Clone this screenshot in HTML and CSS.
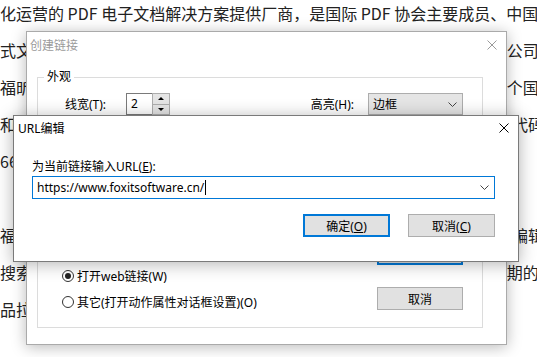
FILE: index.html
```html
<!DOCTYPE html>
<html lang="zh-CN">
<head>
    <meta charset="UTF-8">
    <meta name="viewport" content="width=device-width, initial-scale=1.0">
    <title>URL编辑</title>
    <link rel="stylesheet" href="styles.css">
</head>
<body>

    <!-- page text behind the dialogs -->
    <div class="article">
        <p>化运营的 PDF 电子文档解决方案提供厂商，是国际 PDF 协会主要成员、中国<br>
        式文档标准制定者之一，于 2001 年在福州成立，现为上交所科创板上市公司<br>
        福昕拥有来自全球 6000 多家企业客户，产品和服务均已覆盖全球两百多个国家和地区<br>
        和北京设有研发中心，并在美国、欧洲、日本等地设有分公司，掌握核心代码与技术<br>
        66 项核心技术专利。</p>
        <p>福昕阅读器是一款小巧快速的阅读工具，同时福昕高级版还提供了强大的编辑功能，支持全文<br>
        搜索引擎、云计算与大数据等领域，自 2008 年起开始布局，是国内最早期的 PDF 厂商之一<br>
        品拉近了人与信息之间的距离。</p>
    </div>

    <!-- Create link dialog (inactive) -->
    <div class="dialog dialog-link">
        <div class="titlebar">
            <span class="title">创建链接</span>
            <svg class="close" width="10" height="10" viewBox="0 0 10 10">
                <path d="M0.5 0.5 L9.5 9.5 M9.5 0.5 L0.5 9.5" />
            </svg>
        </div>
        <fieldset class="group">
            <legend>外观</legend>
            <div class="row">
                <label class="lbl-width">线宽(T):</label>
                <div class="spin">
                    <span class="spin-value">2</span>
                    <span class="spin-btns">
                        <span class="spin-btn"><i class="arrow-up"></i></span>
                        <span class="spin-btn"><i class="arrow-down"></i></span>
                    </span>
                </div>
                <label class="lbl-highlight">高亮(H):</label>
                <div class="select">
                    <span>边框</span>
                    <svg class="chevron" width="9" height="5" viewBox="0 0 9 5">
                        <path d="M0.5 0.5 L4.5 4.5 L8.5 0.5" />
                    </svg>
                </div>
            </div>
            <div class="row row-style">
                <label class="lbl-width">线型(S):</label>
                <div class="select select-small"><span>实线</span></div>
            </div>
            <div class="action">
                <div class="radios">
                    <label class="radio"><span class="dot checked"></span>打开web链接(W)</label>
                    <label class="radio"><span class="dot"></span>其它(打开动作属性对话框设置)(O)</label>
                </div>
                <div class="buttons">
                    <button type="button" class="btn btn-default">确定</button>
                    <button type="button" class="btn">取消</button>
                </div>
            </div>
        </fieldset>
    </div>

    <!-- URL edit dialog (active) -->
    <div class="dialog dialog-url">
        <div class="titlebar">
            <span class="title">URL编辑</span>
            <svg class="close" width="10" height="10" viewBox="0 0 10 10">
                <path d="M0.5 0.5 L9.5 9.5 M9.5 0.5 L0.5 9.5" />
            </svg>
        </div>
        <div class="url-body">
            <label class="url-label" for="url">为当前链接输入URL(<u>E</u>):</label>
            <div class="combo" id="url">
                <span class="combo-text">https://www.foxitsoftware.cn/</span><span class="caret"></span>
                <svg class="chevron" width="9" height="5" viewBox="0 0 9 5">
                    <path d="M0.5 0.5 L4.5 4.5 L8.5 0.5" />
                </svg>
            </div>
            <div class="url-buttons">
                <button type="button" class="btn btn-default">确定(<u>O</u>)</button>
                <button type="button" class="btn">取消(<u>C</u>)</button>
            </div>
        </div>
    </div>

</body>
</html>
```

FILE: styles.css
```css
/* Global */
* {
    margin: 0;
    padding: 0;
    box-sizing: border-box;
}

html, body {
    width: 100%;
    height: 100%;
    overflow: hidden;
}

body {
    position: relative;
    background: #ffffff;
    font-family: "Noto Sans CJK SC", sans-serif;
    color: #222222;
}

/* Page text */
.article {
    margin-top: -5px;
    font-size: 16px;
    line-height: 37px;
    white-space: nowrap;
}

.article p + p {
    margin-top: 37px;
}

/* Dialog windows */
.dialog {
    position: absolute;
    background: #ffffff;
    font-family: "Noto Sans", "Noto Sans CJK SC", sans-serif;
    font-size: 12px;
    color: #000000;
}

.titlebar {
    display: flex;
    align-items: center;
    justify-content: space-between;
}

.close {
    fill: none;
    stroke-width: 1;
}

.chevron {
    fill: none;
    stroke: #444444;
    stroke-width: 1;
}

.btn {
    width: 86px;
    height: 23px;
    background: #e1e1e1;
    border: 1px solid #adadad;
    font: inherit;
    color: #000000;
}

.btn-default {
    border: 2px solid #0078d7;
}

/* Create link */
.dialog-link {
    left: 26px;
    top: 31px;
    width: 481px;
    height: 314px;
    border: 1px solid #aaaaaa;
    box-shadow: 0 2px 14px rgba(0, 0, 0, 0.28);
}

.dialog-link .titlebar {
    height: 26px;
    padding: 0 9px 0 3px;
}

.dialog-link .title {
    color: #9a9a9a;
}

.dialog-link .close {
    stroke: #9a9a9a;
}

.group {
    margin: 11px 23px 0 10px;
    padding: 8px 19px 12px 0;
    border: 1px solid #dcdcdc;
}

.group legend {
    margin-left: 6px;
    padding: 0 3px;
    line-height: 16px;
}

.row {
    display: flex;
    align-items: center;
    height: 22px;
    padding-left: 27px;
}

.row-style {
    margin-top: 10px;
}

.lbl-width {
    width: 61px;
}

.spin {
    display: flex;
    width: 44px;
    height: 22px;
}

.spin-value {
    flex: 1;
    border: 1px solid #7a7a7a;
    border-right: none;
    padding-left: 4px;
    line-height: 20px;
}

.spin-btns {
    display: flex;
    flex-direction: column;
    width: 18px;
    border: 1px solid #adadad;
}

.spin-btn {
    flex: 1;
    display: flex;
    align-items: center;
    justify-content: center;
    background: #e5e5e5;
}

.spin-btn + .spin-btn {
    border-top: 1px solid #adadad;
}

.arrow-up {
    border-left: 3px solid transparent;
    border-right: 3px solid transparent;
    border-bottom: 3px solid #000000;
}

.arrow-down {
    border-left: 3px solid transparent;
    border-right: 3px solid transparent;
    border-top: 3px solid #000000;
}

.lbl-highlight {
    margin-left: auto;
    margin-right: 14px;
}

.select {
    display: flex;
    align-items: center;
    justify-content: space-between;
    width: 95px;
    height: 22px;
    padding: 0 5px 0 4px;
    background: #e5e5e5;
    border: 1px solid #adadad;
}

.select-small {
    width: 60px;
}

.action {
    display: flex;
    justify-content: space-between;
    margin-top: 95px;
    padding-left: 24px;
}

.radios {
    padding-top: 21px;
}

.radio {
    display: flex;
    align-items: center;
    height: 26px;
}

.dot {
    display: flex;
    align-items: center;
    justify-content: center;
    width: 12px;
    height: 12px;
    margin-right: 3px;
    border: 1px solid #333333;
    border-radius: 50%;
}

.dot.checked::after {
    content: "";
    width: 6px;
    height: 6px;
    border-radius: 50%;
    background: #222222;
}

.buttons {
    display: flex;
    flex-direction: column;
    gap: 22px;
}

/* URL edit */
.dialog-url {
    left: 13px;
    top: 115px;
    width: 506px;
    height: 147px;
    border: 1px solid #7a7a7a;
    box-shadow: 0 2px 16px rgba(0, 0, 0, 0.3);
}

.dialog-url .titlebar {
    height: 24px;
    padding: 0 9px 0 4px;
}

.dialog-url .close {
    stroke: #000000;
}

.url-body {
    padding: 19px 23px 0 18px;
}

.url-label {
    display: block;
    line-height: 16px;
}

.combo {
    display: flex;
    align-items: center;
    height: 23px;
    margin-top: 1px;
    padding: 0 5px 0 4px;
    border: 1px solid #0078d7;
}

.caret {
    width: 1px;
    height: 15px;
    margin-left: 1px;
    background: #000000;
}

.combo .chevron {
    margin-left: auto;
}

.url-buttons {
    display: flex;
    justify-content: flex-end;
    gap: 18px;
    margin-top: 15px;
}

.url-buttons .btn {
    width: 87px;
}
```
